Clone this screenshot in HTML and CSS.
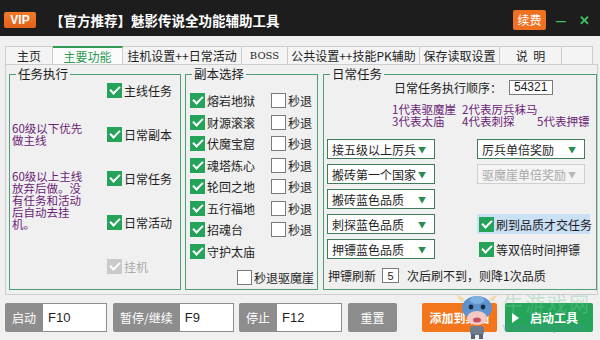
FILE: index.html
```html
<!DOCTYPE html>
<html lang="zh-CN">
<head>
  <meta charset="UTF-8" />
  <title>魅影传说全功能辅助工具</title>
  <link rel="stylesheet" href="styles.css">
</head>
<body>
  <div class="window">
    <header class="titlebar">
      <span class="vip">VIP</span>
      <span class="title">【官方推荐】魅影传说全功能辅助工具</span>
      <span class="renew">续费</span>
      <span class="win-btn">&#8212;</span>
      <span class="win-btn close">&#10005;</span>
    </header>

    <nav class="tabs">
      <span class="tab w48">主页</span>
      <span class="tab w70 active">主要功能</span>
      <span class="tab w119">挂机设置++日常活动</span>
      <span class="tab w46 latin">BOSS</span>
      <span class="tab w132">公共设置++技能PK辅助</span>
      <span class="tab w80">保存读取设置</span>
      <span class="tab w62">说&nbsp;&nbsp;明</span>
      <span class="tab w31"></span>
    </nav>

    <section class="page">
      <fieldset class="group g-task">
        <legend>任务执行</legend>
        <div class="task-grid">
          <label class="check c1"><span class="box"></span>主线任务</label>
          <p class="note n1">60级以下优先<br>做主线</p>
          <label class="check c2"><span class="box"></span>日常副本</label>
          <p class="note n2">60级以上主线<br>放弃后做。没<br>有任务和活动<br>后自动去挂<br>机。</p>
          <label class="check c3"><span class="box"></span>日常任务</label>
          <label class="check c4"><span class="box"></span>日常活动</label>
          <label class="check c5 disabled"><span class="box"></span>挂机</label>
        </div>
      </fieldset>

      <fieldset class="group g-dungeon">
        <legend>副本选择</legend>
        <div class="dungeon-list">
          <div class="d-row"><label class="check d-name"><span class="box"></span>熔岩地狱</label><label class="check"><span class="box off"></span>秒退</label></div>
          <div class="d-row"><label class="check d-name"><span class="box"></span>财源滚滚</label><label class="check"><span class="box off"></span>秒退</label></div>
          <div class="d-row"><label class="check d-name"><span class="box"></span>伏魔宝窟</label><label class="check"><span class="box off"></span>秒退</label></div>
          <div class="d-row"><label class="check d-name"><span class="box"></span>魂塔炼心</label><label class="check"><span class="box off"></span>秒退</label></div>
          <div class="d-row"><label class="check d-name"><span class="box"></span>轮回之地</label><label class="check"><span class="box off"></span>秒退</label></div>
          <div class="d-row"><label class="check d-name"><span class="box"></span>五行福地</label><label class="check"><span class="box off"></span>秒退</label></div>
          <div class="d-row"><label class="check d-name"><span class="box"></span>招魂台</label><label class="check"><span class="box off"></span>秒退</label></div>
          <div class="d-row"><label class="check d-name"><span class="box"></span>守护太庙</label></div>
          <div class="d-last"><label class="check"><span class="box off"></span>秒退驱魔崖</label></div>
        </div>
      </fieldset>

      <fieldset class="group g-daily">
        <legend>日常任务</legend>
        <div class="daily">
          <div class="order-row">日常任务执行顺序：<span class="field order-input">54321</span></div>
          <p class="order-note"><span class="col1">1代表驱魔崖</span><span class="col2">2代表厉兵秣马</span><br><span class="col1">3代表太庙</span><span class="col2">4代表刺探</span>5代表押镖</p>
          <div class="select-grid">
            <div class="select r1">接五级以上厉兵<span class="arrow">&#9660;</span></div>
            <div class="select r1 right">厉兵单倍奖励<span class="arrow">&#9660;</span></div>
            <div class="select r2">搬砖第一个国家<span class="arrow">&#9660;</span></div>
            <div class="select r2 right disabled">驱魔崖单倍奖励<span class="arrow">&#9660;</span></div>
            <div class="select r3">搬砖蓝色品质<span class="arrow">&#9660;</span></div>
            <div class="select r4">刺探蓝色品质<span class="arrow">&#9660;</span></div>
            <label class="check r4 right focus"><span class="box"></span>刷到品质才交任务</label>
            <div class="select r5">押镖蓝色品质<span class="arrow">&#9660;</span></div>
            <label class="check r5 right"><span class="box"></span>等双倍时间押镖</label>
          </div>
          <div class="refresh-row">押镖刷新<span class="field small-input">5</span><span class="after">次后刷不到，则降1次品质</span></div>
        </div>
      </fieldset>
    </section>

    <footer class="controls">
      <div class="hotkey w102"><span class="hk-label">启动</span><span class="hk-field">F10</span></div>
      <div class="hotkey w121"><span class="hk-label">暂停/继续</span><span class="hk-field">F9</span></div>
      <div class="hotkey w103"><span class="hk-label">停止</span><span class="hk-field">F12</span></div>
      <button class="btn reset">重置</button>
      <button class="btn desk">添加到桌面</button>
      <button class="btn start"><span class="play"></span>启动工具</button>
    </footer>

    <div class="mascot">
      <svg width="44" height="50" viewBox="0 0 44 50">
        <path d="M6 12 L1 4 L10 9 Z" fill="#f1d9a8"/>
        <path d="M38 12 L43 4 L34 9 Z" fill="#f1d9a8"/>
        <ellipse cx="22" cy="18" rx="15" ry="12" fill="#5d93cf"/>
        <ellipse cx="22" cy="10" rx="7" ry="4" fill="#7fb0e0"/>
        <circle cx="16" cy="17" r="2.4" fill="#1f2c3d"/>
        <circle cx="28" cy="17" r="2.4" fill="#1f2c3d"/>
        <ellipse cx="22" cy="28" rx="10" ry="7" fill="#f4c9c4"/>
        <ellipse cx="22" cy="30" rx="4" ry="2.5" fill="#c44e5f"/>
        <rect x="15" y="36" width="14" height="9" rx="3" fill="#6f7c8c"/>
        <rect x="16" y="44" width="4" height="5" fill="#596574"/>
        <rect x="24" y="44" width="4" height="5" fill="#596574"/>
      </svg>
    </div>
    <div class="watermark">
      <span class="wm-big">牛游戏网</span>
      <span class="wm-url">www.newyx.net</span>
    </div>
  </div>
</body>
</html>
```

FILE: styles.css
```css
* {
  box-sizing: border-box;
}

body {
  margin: 0;
  background: #f0f0f0;
  font-family: "Noto Sans CJK SC", "Microsoft YaHei", sans-serif;
  font-size: 12px;
  color: #1e1e1e;
}

.window {
  position: relative;
  width: 600px;
  height: 340px;
  overflow: hidden;
}

/* title bar */
.titlebar {
  height: 36px;
  background: #1d1d1d;
  display: flex;
  align-items: center;
  padding: 3px 0 0 4px;
}

.vip {
  width: 32px;
  height: 16px;
  border-radius: 2px;
  background: linear-gradient(#f47a2a, #e2601a);
  color: #fff;
  font: bold 12px "Liberation Sans", Arial, sans-serif;
  display: flex;
  align-items: center;
  justify-content: center;
}

.title {
  margin-left: 14px;
  color: #fff;
  font-size: 13.5px;
  font-weight: bold;
}

.renew {
  margin-left: auto;
  width: 33px;
  height: 20px;
  border-radius: 2px;
  background: #f07021;
  color: #fff;
  display: flex;
  align-items: center;
  justify-content: center;
}

.win-btn {
  width: 22px;
  margin-left: 4px;
  text-align: center;
  color: #3dbf62;
  font-weight: bold;
  font-size: 12px;
}

.win-btn.close {
  margin: 0 5px 0 1px;
  font-size: 13px;
}

/* tabs */
.tabs {
  display: flex;
  height: 28px;
  padding: 10px 0 0 5px;
}

.tab {
  height: 18px;
  border: 1px solid #cdcdcd;
  border-bottom: none;
  border-left: none;
  background: #f4f4f4;
  display: flex;
  align-items: center;
  justify-content: center;
  white-space: nowrap;
}

.tab:first-child {
  border-left: 1px solid #cdcdcd;
}

.tab.active {
  border-top: 2px solid #2e9b50;
  color: #2e9b50;
  background: #fbfbfb;
}

.tab.latin {
  font-family: "DejaVu Serif", serif;
  font-size: 10px;
}

.w48 { width: 48px; }
.w70 { width: 70px; }
.w119 { width: 119px; }
.w46 { width: 46px; }
.w132 { width: 132px; }
.w80 { width: 80px; }
.w62 { width: 62px; }
.w31 { width: 31px; }

/* tab page */
.page {
  width: 593px;
  height: 231px;
  margin-left: 5px;
  border: 1px solid #cdcdcd;
  padding: 2px 0 0 3px;
  display: flex;
}

.group {
  margin: 0;
  padding: 0;
  height: 223px;
  min-width: 0;
  border: 1px solid #4c9e74;
}

.group legend {
  margin-left: 6px;
  padding: 0 2px;
  font-size: 12.5px;
  line-height: 14px;
}

.g-task { width: 172px; }
.g-dungeon { width: 133px; margin-left: 4px; }
.g-daily { width: 274px; margin-left: 5px; }

/* checkboxes */
.check {
  display: flex;
  align-items: center;
  gap: 2px;
  height: 16px;
  white-space: nowrap;
}

.box {
  position: relative;
  width: 15px;
  height: 15px;
  flex: none;
  background: #26a35a;
}

.box::after {
  content: "";
  position: absolute;
  left: 3px;
  top: 3px;
  width: 8px;
  height: 4px;
  border-left: 2px solid #fff;
  border-bottom: 2px solid #fff;
  transform: rotate(-45deg);
}

.box.off {
  background: #fff;
  border: 1px solid #7b7b7b;
}

.box.off::after {
  display: none;
}

.disabled .box {
  background: #cacaca;
}

.check.disabled {
  color: #a9a9a9;
}

/* task group */
.task-grid {
  display: grid;
  grid-template-columns: 95px 1fr;
  grid-template-rows: repeat(5, 16px);
  row-gap: 28px;
  padding: 1px 0 0 2px;
}

.c1 { grid-column: 2; grid-row: 1; }
.c2 { grid-column: 2; grid-row: 2; }
.c3 { grid-column: 2; grid-row: 3; }
.c4 { grid-column: 2; grid-row: 4; }
.c5 { grid-column: 2; grid-row: 5; }

.note {
  margin: 0;
  color: #6b2377;
  font-size: 11.5px;
  line-height: 12px;
  grid-column: 1;
}

.n1 { grid-row: 2; align-self: center; }
.n2 { grid-row: 3 / span 2; align-self: start; }

/* dungeon group */
.dungeon-list {
  padding: 9px 3px 0 4px;
}

.d-row {
  display: flex;
  align-items: center;
  height: 21.5px;
}

.d-name {
  width: 81px;
}

.d-last {
  display: flex;
  justify-content: flex-end;
  margin-top: 7px;
}

/* daily group */
.daily {
  padding-left: 3px;
}

.order-row {
  display: flex;
  align-items: center;
  height: 16px;
  margin: -2px 0 0 67px;
}

.field {
  background: #fff;
  border: 1px solid #7a7a7a;
  font-family: "Liberation Sans", Arial, sans-serif;
  display: flex;
  align-items: center;
}

.order-input {
  width: 44px;
  height: 15px;
  margin-left: 7px;
  padding-left: 4px;
  font-size: 12px;
}

.order-note {
  margin: 8px 0 0 65px;
  font-size: 11.5px;
  line-height: 12px;
  color: #6b2377;
  white-space: nowrap;
}

.order-note span {
  display: inline-block;
}

.col1 { width: 70px; }
.col2 { width: 75px; }

.select-grid {
  display: grid;
  grid-template-columns: 108px 113px;
  grid-template-rows: repeat(5, 20px);
  column-gap: 42px;
  row-gap: 5px;
  margin-top: 12px;
}

.select {
  grid-column: 1;
  border: 1px solid #3f7d59;
  background: #fff;
  padding-left: 4px;
  display: flex;
  align-items: center;
  white-space: nowrap;
}

.select .arrow {
  margin-left: auto;
  margin-right: 8px;
  color: #2b8a52;
  font-size: 8px;
}

.select.disabled {
  border-color: #cfcfcf;
  background: #f4f4f4;
  color: #a9a9a9;
}

.select.disabled .arrow {
  color: #b9b9b9;
}

.right { grid-column: 2; width: 108px; }
.r1 { grid-row: 1; }
.r2 { grid-row: 2; }
.r3 { grid-row: 3; }
.r4 { grid-row: 4; }
.r5 { grid-row: 5; }

.check.right {
  height: 20px;
  padding-left: 2px;
}

.check.focus {
  width: 113px;
  background: #c9e0f5;
}

.refresh-row {
  display: flex;
  align-items: center;
  height: 15px;
  margin: 9px 0 0 1px;
}

.small-input {
  width: 17px;
  height: 15px;
  margin-left: 6px;
  justify-content: center;
  font-size: 11px;
}

.after {
  margin-left: 8px;
}

/* bottom controls */
.controls {
  display: flex;
  height: 29px;
  margin-top: 8px;
  padding-left: 5px;
}

.hotkey {
  display: flex;
  height: 29px;
  margin-right: 5px;
}

.w102 { width: 102px; margin-right: 6px; }
.w121 { width: 121px; }
.w103 { width: 103px; margin-right: 6px; }

.hk-label {
  background: #8d8d8d;
  color: #fff;
  border-radius: 2px 0 0 2px;
  padding: 0 7px;
  display: flex;
  align-items: center;
  white-space: nowrap;
}

.hk-field {
  flex: 1;
  background: #fff;
  border: 1px solid #8d8d8d;
  border-left: none;
  padding-left: 5px;
  display: flex;
  align-items: center;
  font: 13px "Liberation Sans", Arial, sans-serif;
}

.btn {
  height: 29px;
  border: none;
  border-radius: 2px;
  color: #fff;
  font-family: "Noto Sans CJK SC", sans-serif;
  font-size: 12px;
  display: flex;
  align-items: center;
  justify-content: center;
}

.reset {
  width: 49px;
  background: #8d8d8d;
}

.desk {
  width: 75px;
  margin-left: 25px;
  background: #f4761c;
  font-weight: bold;
}

.start {
  width: 88px;
  margin-left: 8px;
  background: #24a55a;
  font-weight: bold;
  padding-left: 16px;
  position: relative;
}

.play {
  position: absolute;
  left: 7px;
  top: 10px;
  border-left: 7px solid #fff;
  border-top: 5px solid transparent;
  border-bottom: 5px solid transparent;
}

/* site watermark laid over the corner */
.mascot {
  position: absolute;
  left: 455px;
  top: 290px;
}

.watermark {
  position: absolute;
  left: 503px;
  top: 292px;
  width: 100px;
  pointer-events: none;
}

.wm-big {
  display: block;
  font-size: 20px;
  letter-spacing: 2px;
  line-height: 24px;
  color: rgba(120, 200, 150, 0.4);
}

.wm-url {
  display: block;
  margin-top: 5px;
  font: 11px "Liberation Sans", Arial, sans-serif;
  letter-spacing: 0.5px;
  color: rgba(90, 140, 170, 0.5);
}
```
